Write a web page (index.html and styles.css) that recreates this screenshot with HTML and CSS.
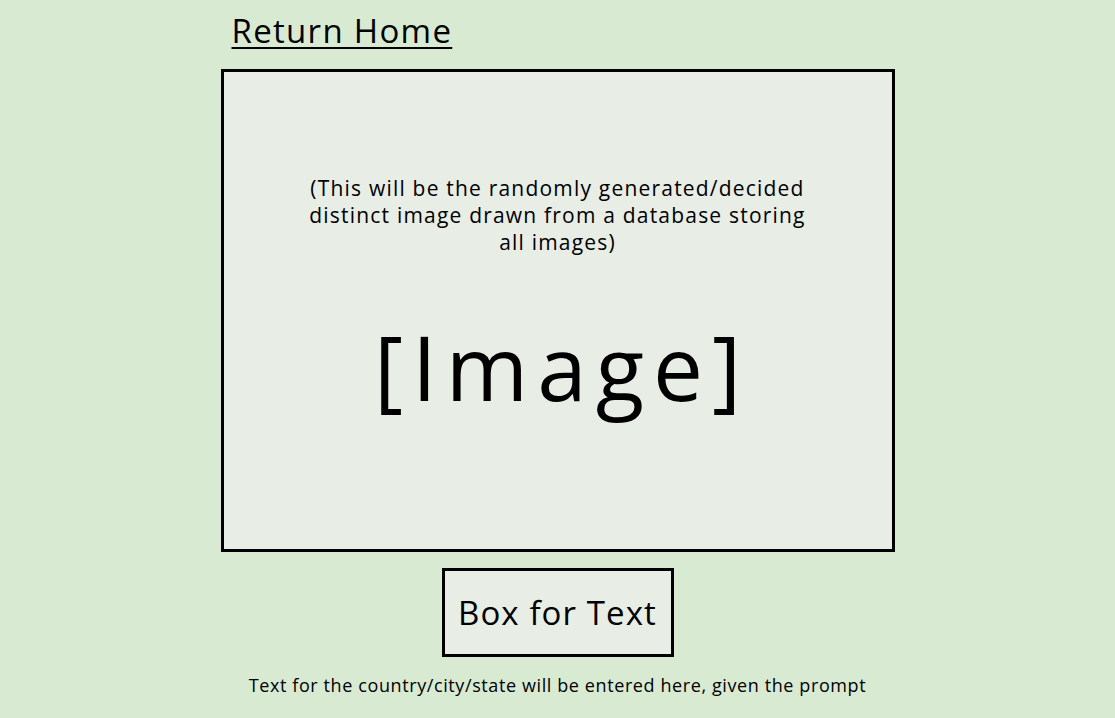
FILE: index.html
```html
<!DOCTYPE html>
<html>
<head>
<meta charset="utf-8">
<link rel="stylesheet" href="styles.css">
</head>
<body>
<main class="page">
  <header class="top">
    <a class="home-link" href="#">Return Home</a>
  </header>
  <section class="image-box">
    <p class="note">(This will be the randomly generated/decided distinct image drawn from a database storing all images)</p>
    <div class="placeholder">[Image]</div>
  </section>
  <div class="text-box">Box for Text</div>
  <p class="caption">Text for the country/city/state will be entered here, given the prompt</p>
</main>
</body>
</html>
```
FILE: styles.css
```css
html, body {
  margin: 0;
  padding: 0;
}
body {
  background: #d9ead3;
  font-family: "Open Sans", "Noto Sans", sans-serif;
  font-weight: 500;
  color: #000;
  height: 718px;
  overflow: hidden;
}
.page {
  width: 674px;
  margin: 0 auto;
  display: flex;
  flex-direction: column;
  align-items: center;
}
.top {
  align-self: stretch;
  height: 69px;
  padding-left: 11px;
  box-sizing: border-box;
}
.home-link {
  display: inline-block;
  margin-top: 8px;
  font-size: 33px;
  line-height: 46px;
  letter-spacing: 1.3px;
  color: #000;
  text-decoration: underline;
  text-decoration-thickness: 2px;
  text-underline-offset: 4px;
}
.image-box {
  align-self: stretch;
  height: 483px;
  box-sizing: border-box;
  border: 3px solid #000;
  background: #e8ede6;
  display: flex;
  flex-direction: column;
  align-items: center;
}
.note {
  margin: 103px 0 0;
  width: 515px;
  font-size: 21px;
  line-height: 27px;
  letter-spacing: 1.2px;
  text-align: center;
}
.placeholder {
  margin-top: 56px;
  font-size: 89px;
  line-height: 110px;
  letter-spacing: 9px;
  padding-left: 9px;
}
.text-box {
  margin-top: 16px;
  width: 232px;
  height: 89px;
  box-sizing: border-box;
  border: 3px solid #000;
  background: #e8ede6;
  display: flex;
  align-items: center;
  justify-content: center;
  font-size: 33px;
  letter-spacing: 1.1px;
}
.caption {
  margin: 16px 0 0;
  font-size: 18px;
  line-height: 24px;
  letter-spacing: 0.6px;
  white-space: nowrap;
}
```
